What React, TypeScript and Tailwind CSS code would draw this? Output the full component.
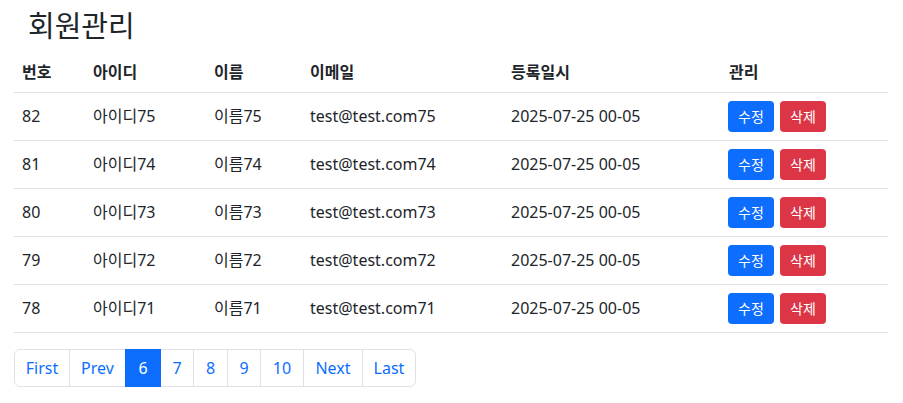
import React from 'react';

interface Member {
  no: number;
  userId: string;
  name: string;
  email: string;
  createdAt: string;
}

const members: Member[] = [82, 81, 80, 79, 78].map((no) => {
  const n = no - 7;
  return {
    no,
    userId: `아이디${n}`,
    name: `이름${n}`,
    email: `test@test.com${n}`,
    createdAt: '2025-07-25 00-05',
  };
});

// widths measured from the screenshot, border to border
const pages: { label: string; w: string }[] = [
  { label: 'First', w: 'w-[56px]' },
  { label: 'Prev', w: 'w-[57px]' },
  { label: '6', w: 'w-[36px]' },
  { label: '7', w: 'w-[34px]' },
  { label: '8', w: 'w-[35px]' },
  { label: '9', w: 'w-[34px]' },
  { label: '10', w: 'w-[44px]' },
  { label: 'Next', w: 'w-[60px]' },
  { label: 'Last', w: 'w-[54px]' },
];

export default function App() {
  return (
    <div
      className="min-h-[403px] bg-white px-[14px] text-[16px] leading-6 text-[#212529]"
      style={{ fontFamily: '"Noto Sans", "Noto Sans CJK KR", sans-serif' }}
    >
      <h2 className="ml-[14px] pt-[9px] mb-2 text-[29px] leading-[1.2] font-normal">회원관리</h2>

      <table className="w-[874px] border-collapse mb-4">
        <thead>
          <tr className="text-left">
            <th className="w-[71px] px-2 py-2 font-bold border-b border-[#dee2e6]">번호</th>
            <th className="w-[121px] px-2 py-2 font-bold border-b border-[#dee2e6]">아이디</th>
            <th className="w-[96px] px-2 py-2 font-bold border-b border-[#dee2e6]">이름</th>
            <th className="w-[201px] px-2 py-2 font-bold border-b border-[#dee2e6]">이메일</th>
            <th className="w-[218px] px-2 py-2 font-bold border-b border-[#dee2e6]">등록일시</th>
            <th className="px-2 py-2 font-bold border-b border-[#dee2e6]">관리</th>
          </tr>
        </thead>
        <tbody>
          {members.map((m) => (
            <tr key={m.no} className="align-middle">
              <td className="px-2 py-2 border-b border-[#dee2e6]">{m.no}</td>
              <td className="px-2 py-2 border-b border-[#dee2e6]">{m.userId}</td>
              <td className="px-2 py-2 border-b border-[#dee2e6]">{m.name}</td>
              <td className="px-2 py-2 border-b border-[#dee2e6]">{m.email}</td>
              <td className="px-2 py-2 border-b border-[#dee2e6]">{m.createdAt}</td>
              <td className="px-2 py-2 border-b border-[#dee2e6]">
                <div className="flex gap-[6px] -ml-px">
                  <button className="w-[46px] h-[31px] rounded-[4px] bg-[#0d6efd] text-white text-[14px] leading-[21px]">
                    수정
                  </button>
                  <button className="w-[46px] h-[31px] rounded-[4px] bg-[#dc3545] text-white text-[14px] leading-[21px]">
                    삭제
                  </button>
                </div>
              </td>
            </tr>
          ))}
        </tbody>
      </table>

      <nav className="flex">
        {pages.map((p, i) => {
          const active = p.label === '6';
          return (
            <a
              key={p.label}
              className={
                'block py-[6px] border text-center leading-6 ' +
                p.w +
                ' ' +
                (i > 0 ? '-ml-px ' : '') +
                (i === 0 ? 'rounded-l-[6px] ' : '') +
                (i === pages.length - 1 ? 'rounded-r-[6px] ' : '') +
                (active
                  ? 'relative z-10 bg-[#0d6efd] border-[#0d6efd] text-white'
                  : 'bg-white border-[#dee2e6] text-[#0d6efd]')
              }
            >
              {p.label}
            </a>
          );
        })}
      </nav>
    </div>
  );
}
